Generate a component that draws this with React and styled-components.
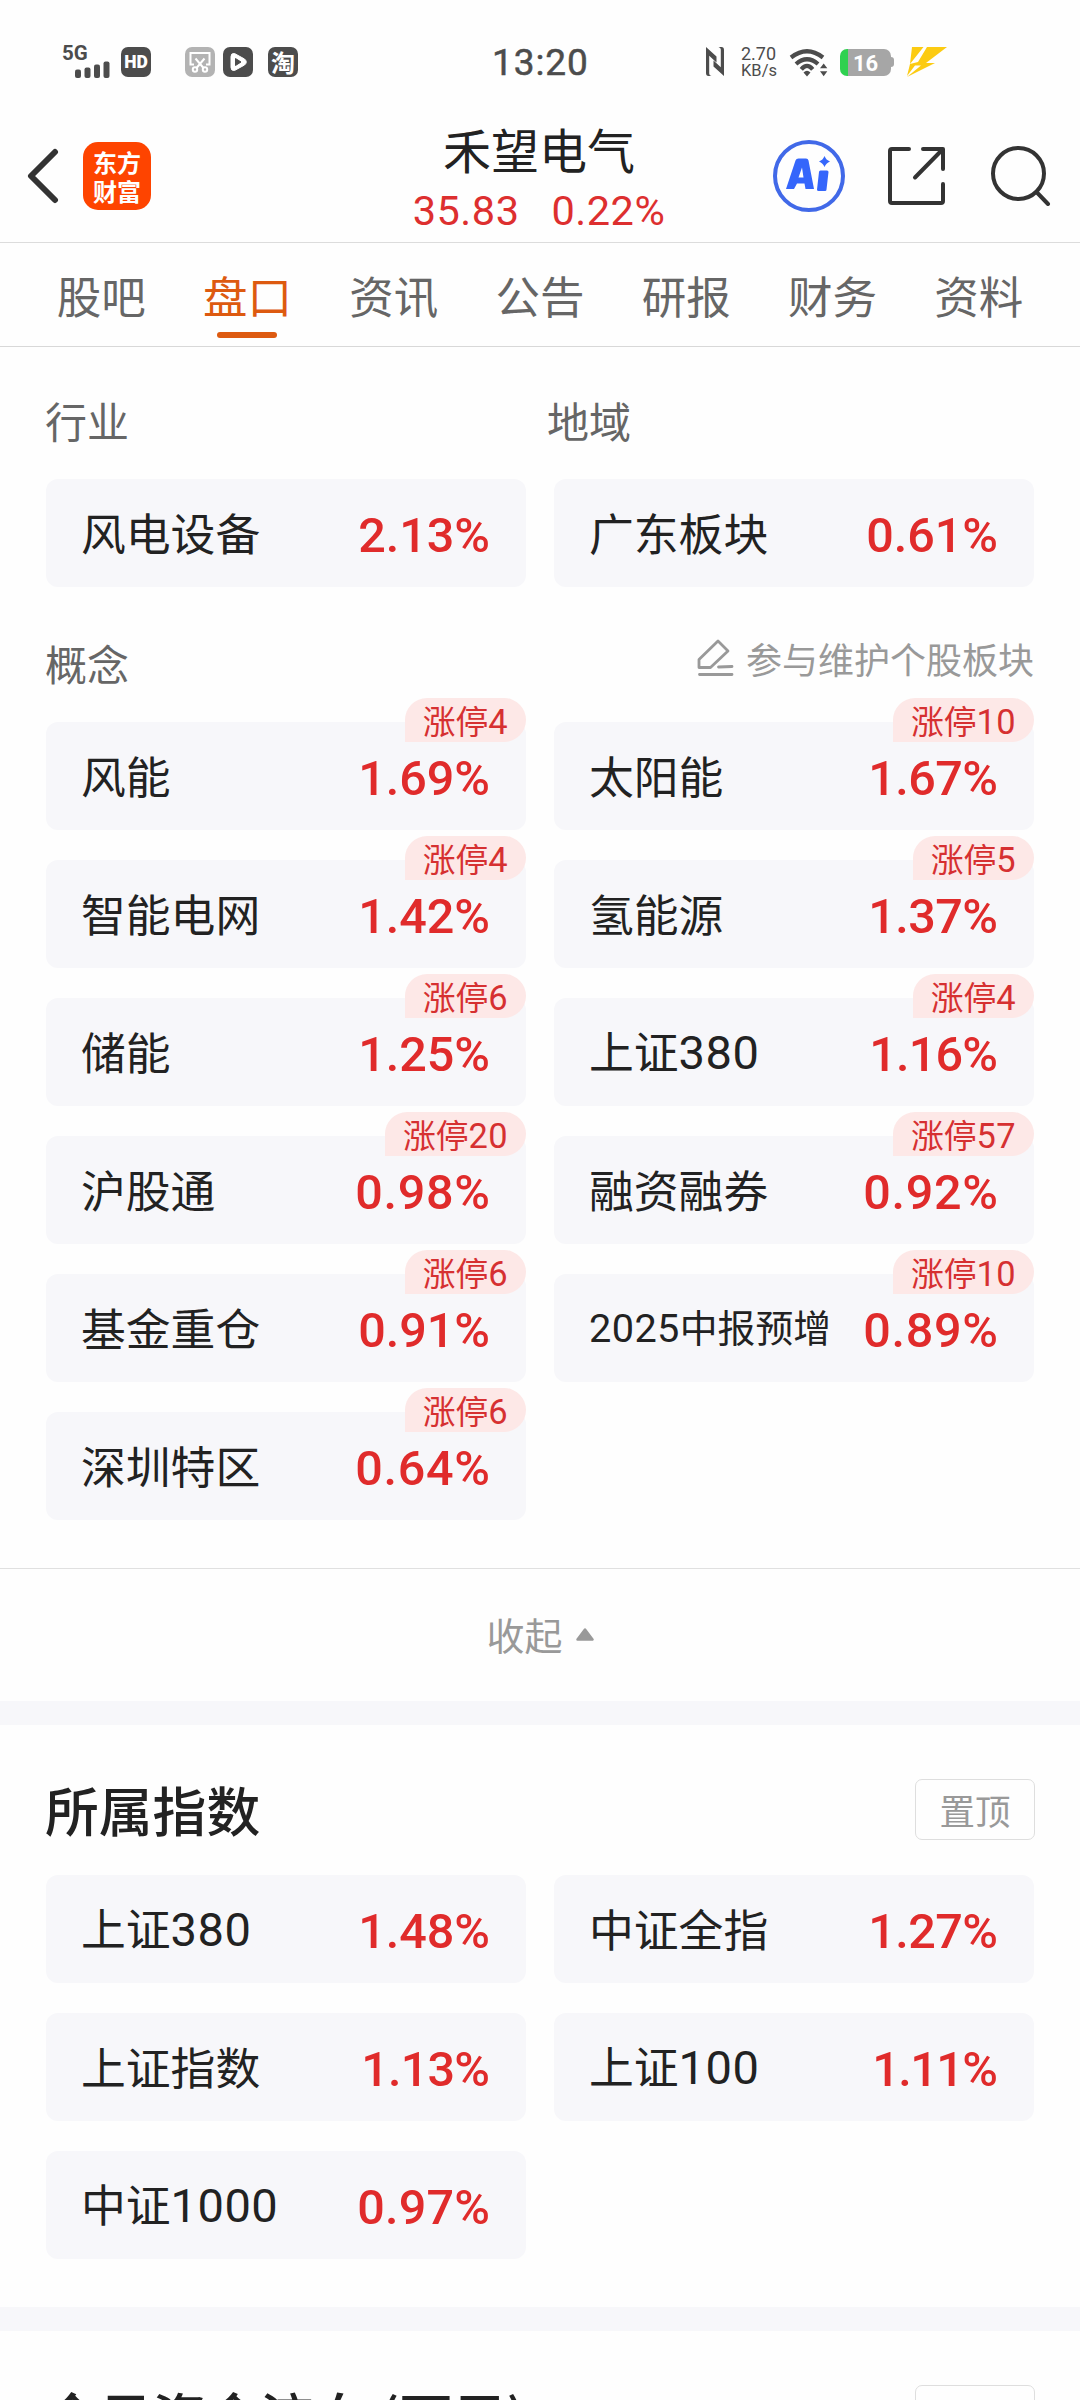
import React from 'react';
import styled, { createGlobalStyle, css } from 'styled-components';

const GlobalStyle = createGlobalStyle`
  html, body { margin: 0; padding: 0; background: #fefefe; }
  body { width: 1080px; height: 2400px; overflow: hidden; font-family: "Noto Sans CJK SC", "Noto Sans", sans-serif; color: #222; }
  * { box-sizing: border-box; }
`;

const Screen = styled.main`
  width: 1080px;
  height: 2400px;
  overflow: hidden;
  display: flex;
  flex-direction: column;
  background: #fefefe;
`;

const Num = styled.span`
  font-family: Roboto, sans-serif;
  font-size: 1.05em;
  letter-spacing: 0.01em;
`;

const Text = ({ children }) =>
  String(children)
    .split(/(\d+)/)
    .filter(Boolean)
    .map((part, i) => (/^\d/.test(part) ? <Num key={i}>{part}</Num> : part));

/* ---------- status bar ---------- */
const StatusBar = styled.header`
  flex: none;
  height: 90px;
  padding: 17px 0 0 62px;
  display: grid;
  grid-template-columns: 430px 223px 1fr;
  color: #4c4c4c;
`;
const StatusGroup = styled.div`
  display: flex;
  align-items: center;
  height: 90px;
`;
const StatusSvg = styled.svg`
  display: block;
  flex: none;
  margin-left: ${(p) => p.$gap || 0}px;
`;
const Signal = styled.div`
  width: 49px;
  height: 32px;
  display: flex;
  flex-direction: column;
`;
const SignalName = styled.span`
  font: 700 20.5px/15px Roboto, sans-serif;
  height: 15px;
`;
const AppTile = styled.span`
  width: 30px;
  height: 30px;
  margin-left: ${(p) => p.$gap}px;
  border-radius: 7px;
  background: #4c4c4c;
  color: #fff;
  display: flex;
  align-items: center;
  justify-content: center;
  font: ${(p) => (p.$latin ? '900 17.5px/30px Roboto, sans-serif' : '700 24px/30px "Noto Sans CJK SC", sans-serif')};
`;
const Clock = styled.time`
  font: 400 37px/91px Roboto, sans-serif;
  -webkit-text-stroke: 0.5px #4c4c4c;
  letter-spacing: 0.9px;
`;
const Speed = styled.div`
  width: 36px;
  margin-left: 17px;
  display: flex;
  flex-direction: column;
  font: 400 18px/17px Roboto, sans-serif;
`;
const SpeedUnit = styled.span`
  font-size: 16.5px;
`;
const Battery = styled.div`
  width: 51px;
  height: 27px;
  margin-left: 12px;
  border-radius: 7px;
  background: linear-gradient(90deg, #2fd150 8px, #a6a6a6 8px);
  color: #fff;
  text-align: center;
  font: 700 22px/29px Roboto, sans-serif;
`;
const BatteryTip = styled.span`
  width: 3px;
  height: 10px;
  border-radius: 0 3px 3px 0;
  background: #a6a6a6;
`;

/* ---------- title bar ---------- */
const TitleBar = styled.header`
  flex: none;
  height: 153px;
  padding: 0 29px 0 27px;
  border-bottom: 1px solid #dcdcdc;
  display: grid;
  grid-template-columns: 1fr auto 1fr;
`;
const TitleSide = styled.div`
  height: 171px;
  display: flex;
  align-items: center;
  justify-content: ${(p) => (p.$end ? 'flex-end' : 'flex-start')};
`;
const Brand = styled.div`
  width: 68px;
  height: 68px;
  margin-left: 24px;
  padding-top: 5px;
  border-radius: 15px;
  background: #fe4400;
  color: #fff;
  font: 700 24px/29px "Noto Sans CJK SC", sans-serif;
  text-align: center;
  display: flex;
  flex-direction: column;
`;
const StockBlock = styled.div`
  display: flex;
  flex-direction: column;
  align-items: center;
`;
const StockName = styled.h1`
  margin: 26px 0 0;
  font-size: 48px;
  line-height: 64px;
  font-weight: 400;
  color: #222;
`;
const Quote = styled.div`
  display: flex;
  gap: 32px;
  margin-top: 2px;
  font: 400 41.5px/58px Roboto, sans-serif;
  letter-spacing: 0.5px;
  color: #dd2f2f;
`;
const HeadIcon = styled.svg`
  display: block;
  flex: none;
  margin-left: ${(p) => p.$gap || 0}px;
`;

/* ---------- tabs ---------- */
const Tabs = styled.nav`
  flex: none;
  height: 104px;
  padding: 0 28px;
  display: flex;
  border-bottom: 1px solid #d8d8d8;
`;
const Tab = styled.div`
  flex: 1;
  padding-top: 21px;
  display: flex;
  flex-direction: column;
  align-items: center;
  font-size: 44.5px;
  line-height: 62px;
  color: #666;
  ${(p) =>
    p.$active &&
    css`
      color: #dd5a10;
      &::after {
        content: '';
        width: 60px;
        height: 6px;
        margin-top: 6px;
        border-radius: 3px;
        background: #dd5a10;
      }
    `}
`;

/* ---------- sections ---------- */
const Section = styled.section`
  flex: none;
  padding: ${(p) => p.$top}px 46px 0;
`;
const LabelRow = styled.div`
  display: grid;
  grid-template-columns: 502px 1fr;
  height: ${(p) => p.$height}px;
`;
const Label = styled.h2`
  margin: 0 0 0 -1px;
  font-size: 42px;
  line-height: 60px;
  font-weight: 400;
  color: #666;
`;
const EditLink = styled.a`
  display: flex;
  justify-content: flex-end;
  gap: 12px;
  color: #999;
  font-size: 36px;
  line-height: 50px;
`;
const EditIcon = styled.svg`
  display: block;
  margin-top: 6px;
`;
const Grid = styled.div`
  display: grid;
  grid-template-columns: 480px 480px;
  grid-auto-rows: 108px;
  gap: 30px 28px;
`;
const Card = styled.article`
  position: relative;
  padding: 0 36px 0 35px;
  display: flex;
  align-items: center;
  justify-content: space-between;
  border-radius: 12px;
  background: #f7f7fa;
`;
const CardName = styled.span`
  font-size: ${(p) => (p.$small ? 37.8 : 44.8)}px;
  line-height: 64px;
  padding-bottom: 2px;
  white-space: nowrap;
  color: #222;
`;
const Change = styled.span`
  font: 500 48.5px/64px Roboto, sans-serif;
  padding-top: 5px;
  letter-spacing: ${(p) => p.$spacing}px;
  margin-right: ${(p) => -p.$spacing}px;
  color: #e02b2b;
`;
const Badge = styled.span`
  position: absolute;
  top: -24px;
  right: 0;
  height: 44px;
  padding: 0 18px;
  border-radius: 22px 22px 22px 0;
  background: #fde8e7;
  color: #d63031;
  font-size: 32.8px;
  line-height: 44px;
  white-space: nowrap;
`;
const Fold = styled.div`
  flex: none;
  height: 133px;
  margin-top: 48px;
  border-top: 1px solid #e0e0e0;
  padding-bottom: 2px;
  display: flex;
  justify-content: center;
  align-items: center;
  gap: 13px;
  color: #999;
  font-size: 38px;
  line-height: 56px;
`;
const Band = styled.div`
  flex: none;
  height: 24px;
  background: #f7f7fa;
`;
const SectionHead = styled.div`
  height: 96px;
  display: flex;
  justify-content: space-between;
  align-items: flex-start;
`;
const SectionTitle = styled.h2`
  margin: 0 0 0 -1px;
  font-size: 53.8px;
  line-height: 60px;
  font-weight: 500;
  color: #222;
`;
const PinButton = styled.button`
  width: 120px;
  height: 61px;
  margin-right: -1px;
  padding: 0;
  border: 1px solid #dedede;
  border-radius: 7px;
  background: transparent;
  color: #999;
  font: 400 35.5px/57px "Noto Sans CJK SC", sans-serif;
`;
const Spacer = styled.div`
  flex: none;
  height: ${(p) => p.$h}px;
`;

const tabs = ['股吧', '盘口', '资讯', '公告', '研报', '财务', '资料'];
const places = [
  { name: '风电设备', change: '2.13%' },
  { name: '广东板块', change: '0.61%' },
];
const concepts = [
  { name: '风能', change: '1.69%', badge: '涨停4' },
  { name: '太阳能', change: '1.67%', badge: '涨停10' },
  { name: '智能电网', change: '1.42%', badge: '涨停4' },
  { name: '氢能源', change: '1.37%', badge: '涨停5' },
  { name: '储能', change: '1.25%', badge: '涨停6' },
  { name: '上证380', change: '1.16%', badge: '涨停4' },
  { name: '沪股通', change: '0.98%', badge: '涨停20' },
  { name: '融资融券', change: '0.92%', badge: '涨停57' },
  { name: '基金重仓', change: '0.91%', badge: '涨停6' },
  { name: '2025中报预增', change: '0.89%', badge: '涨停10', small: true },
  { name: '深圳特区', change: '0.64%', badge: '涨停6' },
];
const indexes = [
  { name: '上证380', change: '1.48%' },
  { name: '中证全指', change: '1.27%' },
  { name: '上证指数', change: '1.13%' },
  { name: '上证100', change: '1.11%' },
  { name: '中证1000', change: '0.97%' },
];

/* Narrow digits (1 and 7) pull the figure together a little. */
const figureSpacing = (value) => {
  const ones = value.split('1').length - 1;
  const sevens = value.split('7').length - 1;
  return 0.7 - 0.75 * ones - 0.5 * sevens;
};

const Cards = ({ items }) => (
  <Grid>
    {items.map((it) => (
      <Card key={it.name}>
        <CardName $small={it.small}><Text>{it.name}</Text></CardName>
        <Change $spacing={figureSpacing(it.change)}>{it.change}</Change>
        {it.badge && <Badge><Text>{it.badge}</Text></Badge>}
      </Card>
    ))}
  </Grid>
);

const Status = () => (
  <StatusBar>
    <StatusGroup>
      <Signal>
        <SignalName>5G</SignalName>
        <StatusSvg width="48" height="17" viewBox="0 0 48 17" fill="#4c4c4c">
          <rect x="13" y="8.5" width="6" height="8.5" rx="2" />
          <rect x="22.5" y="6.5" width="6" height="10.5" rx="2" />
          <rect x="32" y="3.5" width="6" height="13.5" rx="2" />
          <rect x="41.5" y="0.5" width="6" height="16.5" rx="2" />
        </StatusSvg>
      </Signal>
      <AppTile $gap={10} $latin>HD</AppTile>
      <StatusSvg $gap={34} width="30" height="30" viewBox="0 0 30 30" fill="none" stroke="#fff" strokeWidth="2">
        <rect width="30" height="30" rx="7" fill="#b3b3b3" stroke="none" />
        <path d="M9 17.5H5.5V6H24.5V17.5H21M10.5 11.5L18.5 21M19.5 11.5L11.5 21" />
        <circle cx="10" cy="22.5" r="2.2" />
        <circle cx="20" cy="22.5" r="2.2" />
      </StatusSvg>
      <StatusSvg $gap={8} width="30" height="30" viewBox="0 0 30 30">
        <rect width="30" height="30" rx="7" fill="#4c4c4c" />
        <path d="M11.5 6.500Q8 6 8 9.500V20.500Q8 24 11.500 23.500L21.500 18Q25 15 21.500 12Z" fill="#fff" stroke="#fff" strokeLinejoin="round" />
        <path d="M12.500 11.500V18.500L18 15Z" fill="#4c4c4c" stroke="#4c4c4c" strokeLinejoin="round" />
      </StatusSvg>
      <AppTile $gap={15}>淘</AppTile>
    </StatusGroup>
    <Clock>13:20</Clock>
    <StatusGroup>
      <StatusSvg $gap={-9} width="18" height="30" viewBox="0 0 18 30" fill="#4c4c4c">
        <path d="M0 0L10.5 9.5V15.5L3.2 8.8V26.5Q3.2 28.5 5.5 29H2.5Q0 29 0 26Z" />
        <path d="M0 0L10.5 9.5V15.5L3.2 8.8V26.5Q3.2 28.5 5.5 29H2.5Q0 29 0 26Z" transform="rotate(180 9 14.5)" />
      </StatusSvg>
      <Speed>
        <span>2.70</span>
        <SpeedUnit>KB/s</SpeedUnit>
      </Speed>
      <StatusSvg $gap={12} width="39" height="30" viewBox="0 0 39 30" fill="none" stroke="#4c4c4c" strokeWidth="4.2">
        <path d="M2 10.5Q18 -2 34 10.5M7 17Q18 7.600 29 17M12.300 22.300Q18 15.500 23.700 22.300" />
        <path d="M14.5 25.500Q18 22 21.500 25.500L18 29.500Z M31 21.300L34.700 16.500L38.300 21.300Z M31 24.200L34.700 29.300L38.300 24.200Z" fill="#4c4c4c" stroke="none" />
      </StatusSvg>
      <Battery>16</Battery>
      <BatteryTip />
      <StatusSvg $gap={12} width="42" height="31" viewBox="0 0 42 31" fill="#fccb12">
        <path d="M6 0H17.500L4 17Z M21 0H41L20 16H29L1 30L15 18.500H9L1 29L4 17L12 15Z" />
      </StatusSvg>
    </StatusGroup>
  </StatusBar>
);

export default function App() {
  return (
    <Screen>
      <GlobalStyle />
      <Status />
      <TitleBar>
        <TitleSide>
          <HeadIcon width="32" height="56" viewBox="0 0 32 56" fill="none" stroke="#333" strokeWidth="6" strokeLinecap="round" strokeLinejoin="round">
            <path d="M28 4L4 28L28 52" />
          </HeadIcon>
          <Brand><span>东方</span><span>财富</span></Brand>
        </TitleSide>
        <StockBlock>
          <StockName>禾望电气</StockName>
          <Quote><span>35.83</span><span>0.22%</span></Quote>
        </StockBlock>
        <TitleSide $end>
          <HeadIcon width="72" height="72" viewBox="0 0 72 72">
            <circle cx="36" cy="36" r="34" fill="none" stroke="#4169e8" strokeWidth="4" />
            <path fillRule="evenodd" d="M25.500 18.500H33Q35 18.500 35.500 20.500L41 49H32.500L31.500 43.500H24L21 49H13L22.500 20.500Q23.200 18.500 25.500 18.500ZM29 27.500L25.500 37.500H30.500Z" fill="#3566fb" />
            <path d="M47.500 30.500H54Q55.500 30.500 55.500 32L53.500 49.500Q53.500 51 52 51H45.500Q44 51 44 49.500L46 32Q46 30.500 47.500 30.500Z" fill="#3566fb" />
            <path d="M51.500 16Q53 20 57 21.500Q53 23 51.500 27Q50 23 46 21.500Q50 20 51.500 16Z" fill="#3566fb" />
          </HeadIcon>
          <HeadIcon $gap={42} width="60" height="60" viewBox="0 0 60 60" fill="none" stroke="#333" strokeWidth="4" strokeLinecap="round" strokeLinejoin="round">
            <path d="M22 3H5Q3 3 3 5V55Q3 57 5 57H54Q56 57 56 55V38M36 3H56V23M55 4L28 31.500" />
          </HeadIcon>
          <HeadIcon $gap={44} width="60" height="60" viewBox="0 0 60 60" fill="none" stroke="#333" strokeWidth="4" strokeLinecap="round">
            <circle cx="27.5" cy="27.5" r="25.5" />
            <path d="M45.5 46L57 58" />
          </HeadIcon>
        </TitleSide>
      </TitleBar>
      <Tabs>
        {tabs.map((t) => (
          <Tab key={t} $active={t === '盘口'}>{t}</Tab>
        ))}
      </Tabs>
      <Section $top={43}>
        <LabelRow $height={89}>
          <Label>行业</Label>
          <Label>地域</Label>
        </LabelRow>
        <Cards items={places} />
      </Section>
      <Section $top={46}>
        <LabelRow $height={89}>
          <Label>概念</Label>
          <EditLink>
            <EditIcon width="37" height="38" viewBox="0 0 37 38" fill="none" stroke="#999" strokeWidth="2.8" strokeLinecap="round" strokeLinejoin="round">
              <path d="M2 28.500V20.500L21 2L31 12L13.500 28.500ZM21.500 28L35 27.500M2.500 35.500H35" />
            </EditIcon>
            参与维护个股板块
          </EditLink>
        </LabelRow>
        <Cards items={concepts} />
      </Section>
      <Fold>
        收起
        <svg width="18" height="13" viewBox="0 0 18 13">
          <path d="M9 1.500L16.500 11.500H1.500Z" fill="#999" stroke="#999" strokeWidth="2.5" strokeLinejoin="round" />
        </svg>
      </Fold>
      <Band />
      <Section $top={54}>
        <SectionHead>
          <SectionTitle>所属指数</SectionTitle>
          <PinButton>置顶</PinButton>
        </SectionHead>
        <Cards items={indexes} />
      </Section>
      <Spacer $h={48} />
      <Band />
      <Section $top={54}>
        <SectionHead>
          <SectionTitle>今日资金流向 (万元)</SectionTitle>
          <PinButton>置顶</PinButton>
        </SectionHead>
      </Section>
    </Screen>
  );
}
